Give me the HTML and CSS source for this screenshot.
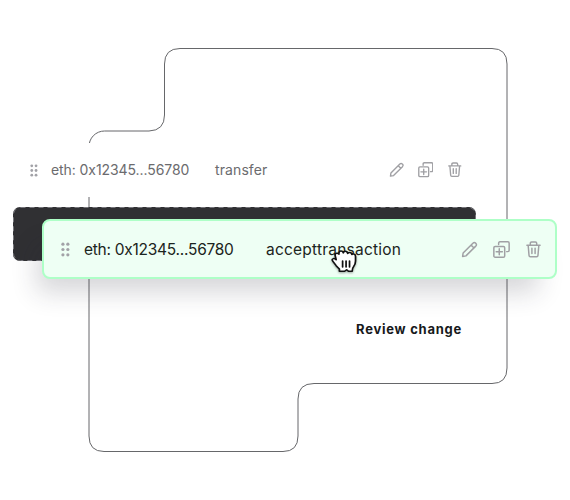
FILE: index.html
```
<!DOCTYPE html>
<html lang="en">
<head>
<meta charset="utf-8">
<title>Review change</title>
<link rel="stylesheet" href="styles.css">
</head>
<body>
<svg class="symbols" aria-hidden="true">
  <symbol id="grip" viewBox="0 0 8 14"><g fill="currentColor"><circle cx="1.6" cy="2" r="1.5"/><circle cx="6.2" cy="2" r="1.5"/><circle cx="1.6" cy="7" r="1.5"/><circle cx="6.2" cy="7" r="1.5"/><circle cx="1.6" cy="12" r="1.5"/><circle cx="6.2" cy="12" r="1.5"/></g></symbol>
  <symbol id="pencil" viewBox="0 0 16 16"><path d="M1.5 14.5 2 11.3 11.200 2.100Q12.500.9 13.700 2L14 2.300Q15.100 3.500 13.900 4.800L4.700 14ZM1.500 14.500 4.700 14M9.500 3.800 12.200 6.500"/></symbol>
  <symbol id="copy" viewBox="0 0 16 16"><path d="M5.3 3.3V2Q5.3.8 6.5.8H14Q15.2.8 15.2 2V8.8Q15.2 10 14 10H12.9"/><rect x=".8" y="5.1" width="10.2" height="10.1" rx="1.2"/><path d="M5.9 7.3V13M3 10.15H8.8"/></symbol>
  <symbol id="trash" viewBox="0 0 16 16"><path d="M1.8 4H14.2M5 3.8V2.2Q5 1 6.2 1H9.8Q11 1 11 2.2V3.800M3 4.200 3.800 13.700Q3.900 14.800 5 14.800H11Q12.100 14.800 12.200 13.700L13 4.200M6.5 6.800V11.800M9.5 6.800V11.800"/></symbol>
</svg>
<main class="stage">
  <svg class="outline" viewBox="0 0 570 500" aria-hidden="true"><path d="M89 147A15.500 15.500 0 0 1 104.500 131H149Q164.500 130.500 164.500 115V64Q164.500 48.500 180 48.500H492Q507 48.500 507 64V368Q507 383.500 492 383.500H314Q298 383.500 298 399V436Q298 451.500 283 451.500H104Q89 451.500 89 436Z"/></svg>
  <div class="row">
    <svg class="grip"><use href="#grip"/></svg>
    <span class="address">eth: 0x12345...56780</span>
    <span class="method">transfer</span>
    <span class="actions"><svg><use href="#pencil"/></svg><svg><use href="#copy"/></svg><svg><use href="#trash"/></svg></span>
  </div>
  <div class="slot">
    <svg class="dashes" viewBox="0 0 463 54"><rect x=".5" y=".5" width="462" height="53" rx="7"/></svg>
    <div class="row dragged">
      <svg class="grip"><use href="#grip"/></svg>
      <span class="address">eth: 0x12345...56780</span>
      <span class="method">accepttransaction</span>
      <span class="actions"><svg><use href="#pencil"/></svg><svg><use href="#copy"/></svg><svg><use href="#trash"/></svg></span>
      <svg class="hand" viewBox="0 0 26 25" preserveAspectRatio="none"><path d="M9 22.300V20Q7.700 18.500 6.200 16.700L3.400 12.400Q2 10.300 3.700 9.600Q4.700 9.100 6.200 10.700L5.400 7Q4.900 4.500 6.700 4.200Q7.900 4 8.600 5.200V3.800Q8.800 2.100 10.400 2.100Q11.900 2.100 12.400 3.900Q12.700 2.300 14.200 2.300Q15.900 2.300 16.200 4.500Q16.700 3.300 18.200 3.500Q19.700 3.700 19.800 5.500Q20.200 4.900 21.500 5.100Q23 5.400 23 7.500V12Q23 15 21.300 17.700Q20.100 19.500 20.100 22.300H16.900L15.300 20.700 13.500 22.300Z"/><path d="M11.800 12V18M14.800 12V18M17.800 12V18"/></svg>
    </div>
  </div>
  <div class="footer">Review change</div>
</main>
</body>
</html>
```

FILE: styles.css
```
* { box-sizing: border-box; }
body { margin: 0; background: #fff; font-family: Inter, "Liberation Sans", sans-serif; }
.symbols { position: absolute; width: 0; height: 0; }
.stage { position: relative; width: 570px; height: 500px; padding: 143px 94px 0 13px; overflow: hidden; }
.outline { position: absolute; inset: 0; width: 570px; height: 500px; fill: none; stroke: #66676a; stroke-width: 1; }
.row { position: relative; display: flex; align-items: center; height: 54px; padding: 0 13px 0 17px; background: #fff; color: #6b6b6e; font-size: 14px; font-weight: 400; white-space: nowrap; }
.grip { width: 8px; height: 13px; flex: none; color: #a2a2a7; }
.address { width: 164px; margin-left: 13px; flex: none; letter-spacing: -0.08px; }
.method { letter-spacing: .1px; }
.row:not(.dragged) .address, .row:not(.dragged) .method { margin-top: -1px; }
.actions { display: flex; align-items: center; gap: 13.500px; margin: 0 1px 0 auto; }
.actions svg { width: 15.500px; height: 15.500px; fill: none; stroke: #a0a0a4; stroke-width: 1.400; stroke-linejoin: round; stroke-linecap: round; }
.slot { position: relative; height: 54px; margin-top: 10px; background: #303033; border-radius: 7px; }
.dashes { position: absolute; inset: 0; width: 463px; height: 54px; fill: none; stroke: #77777c; stroke-width: 1; stroke-dasharray: 5 4; }
.dragged { position: absolute; left: 29px; top: 12px; width: 515px; height: 60px; padding: 0 12px 0 17px; background: #eefff4; border: 2px solid #aeffc7; border-radius: 8px; box-shadow: -12px 20px 26px -7px rgba(35, 38, 55, .19); color: #1b2420; font-size: 15.500px; }
.dragged .grip { width: 9px; height: 15px; }
.dragged .address { width: 182px; margin-left: 14px; letter-spacing: -0.26px; }
.dragged .method { letter-spacing: .22px; }
.dragged .actions { gap: 15px; }
.dragged .actions svg { width: 17px; height: 17px; }
.dragged .hand { position: absolute; left: 285px; top: 28px; width: 30px; height: 25px; fill: #fff; stroke: #111; stroke-width: 1.500; stroke-linejoin: round; stroke-linecap: round; filter: drop-shadow(0 1px 1px rgba(0, 0, 0, .35)); }
.footer { position: relative; margin-top: 59px; padding-right: 14px; text-align: right; color: #17191b; font-size: 13px; line-height: 18px; font-weight: 650; letter-spacing: .75px; }
```
